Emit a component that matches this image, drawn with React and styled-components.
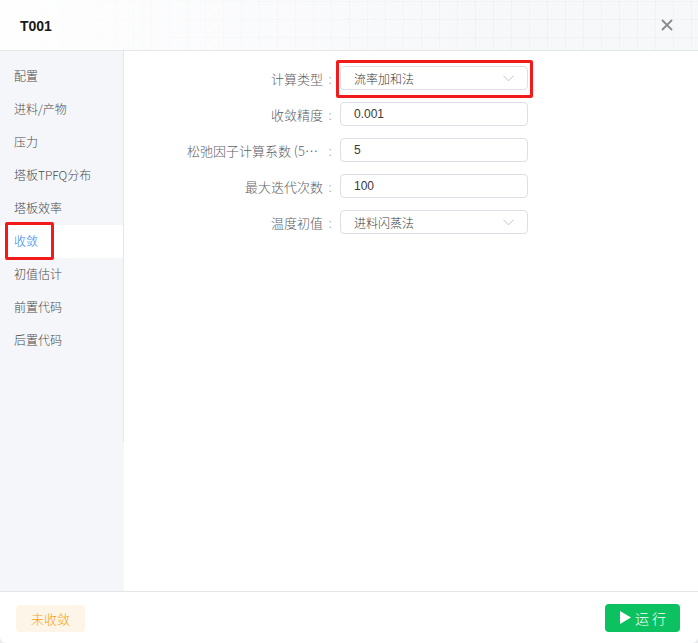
import React, { useState } from 'react'
import styled, { createGlobalStyle } from 'styled-components'

const GlobalStyle = createGlobalStyle`
  html, body {
    margin: 0;
    padding: 0;
    background: #e9eaee;
  }
  * { box-sizing: border-box; }
`

const menu = ['配置', '进料/产物', '压力', '塔板TPFQ分布', '塔板效率', '收敛', '初值估计', '前置代码', '后置代码']

const fields = [
  { label: '计算类型', value: '流率加和法', select: true, marked: true },
  { label: '收敛精度', value: '0.001' },
  { label: '松弛因子计算系数 (5~10)', value: '5' },
  { label: '最大迭代次数', value: '100' },
  { label: '温度初值', value: '进料闪蒸法', select: true },
]

const Dialog = styled.div`
  width: 698px;
  height: 643px;
  background: #fff;
  border-radius: 0 0 6px 6px;
  display: flex;
  flex-direction: column;
  overflow: hidden;
  font-family: "Noto Sans CJK SC", "Liberation Sans", sans-serif;
  font-weight: 300;
`

const Header = styled.div`
  height: 51px;
  flex: none;
  display: flex;
  align-items: center;
  justify-content: space-between;
  padding: 0 25px 0 20px;
  border-bottom: 1px solid #e6e7eb;
  background-color: #f7f8fa;
  background-image:
    linear-gradient(90deg, rgba(255,255,255,0.9), rgba(255,255,255,0) 70%),
    linear-gradient(rgba(0,0,0,0.025) 1px, transparent 1px),
    linear-gradient(90deg, rgba(0,0,0,0.025) 1px, transparent 1px);
  background-size: 100% 100%, 18px 18px, 18px 18px;
  background-position: 0 0, 0 1px, 7px 0;
`

const Title = styled.div`
  font-family: "Liberation Sans", Arial, sans-serif;
  font-weight: bold;
  font-size: 14px;
  color: #1a1a1a;
  margin-top: 1px;
`

const Close = styled.button`
  border: 0;
  background: none;
  padding: 0;
  width: 12px;
  height: 12px;
  cursor: pointer;
  display: flex;
  svg { display: block; }
`

const Body = styled.div`
  flex: 1;
  display: flex;
  min-height: 0;
`

const Sidebar = styled.div`
  width: 124px;
  flex: none;
  background: #f5f6fa;
`

const Menu = styled.ul`
  list-style: none;
  margin: 0;
  padding: 9px 0 0;
  height: 390px;
  border-right: 1px solid #e5e6ea;
`

const MenuItem = styled.li`
  height: 33px;
  line-height: 32px;
  padding-left: 14px;
  font-size: 12px;
  color: ${p => (p.$active ? '#2b7ef5' : '#4a4a4a')};
  background: ${p => (p.$active ? '#fff' : 'transparent')};
  position: relative;
  cursor: pointer;
`

const Mark = styled.span`
  position: absolute;
  border: 3px solid #f21b1b;
  border-radius: 2px;
  pointer-events: none;
  left: ${p => p.$l}px;
  top: ${p => p.$t}px;
  width: ${p => p.$w}px;
  height: ${p => p.$h}px;
`

const Main = styled.div`
  flex: 1;
  padding: 15px 0 0 63px;
  display: flex;
  flex-direction: column;
  gap: 12px;
`

const Row = styled.div`
  display: flex;
  align-items: center;
  height: 24px;
`

const Label = styled.div`
  width: 136px;
  font-size: 13px;
  color: #5e6066;
  text-align: right;
  white-space: nowrap;
  overflow: hidden;
  text-overflow: ellipsis;
`

const Colon = styled.span`
  width: 14px;
  font-size: 13px;
  color: #aaa;
  text-align: center;
  margin-right: 3px;
`

const Field = styled.div`
  position: relative;
  width: 188px;
  height: 24px;
  border: 1px solid #dcdfe6;
  border-radius: 4px;
  display: flex;
  align-items: center;
  justify-content: space-between;
  padding: 0 13px;
  font-size: 12px;
  color: #3a3a3a;
  font-family: ${p => (p.$select ? '"Noto Sans CJK SC", sans-serif' : '"Liberation Sans", Arial, sans-serif')};
  font-weight: ${p => (p.$select ? 300 : 400)};
`

const Footer = styled.div`
  height: 52px;
  flex: none;
  border-top: 1px solid #e4e5e9;
  display: flex;
  align-items: center;
  justify-content: space-between;
  padding: 0 18px 0 16px;
`

const Status = styled.div`
  height: 27px;
  width: 69px;
  border-radius: 4px;
  background: #fdf5e7;
  color: #f5a21b;
  font-size: 13px;
  display: flex;
  align-items: center;
  justify-content: center;
  margin-top: 1px;
`

const RunButton = styled.button`
  height: 28px;
  width: 75px;
  border: 0;
  border-radius: 4px;
  background: #0bc160;
  color: #fff;
  font-size: 14px;
  font-weight: 300;
  font-family: "Noto Sans CJK SC", sans-serif;
  display: flex;
  align-items: center;
  justify-content: center;
  gap: 4px;
  letter-spacing: 3px;
  padding: 0 0 0 4px;
  cursor: pointer;
`

const Chevron = () => (
  <svg width="11" height="7" viewBox="0 0 11 7" fill="none">
    <path d="M0.5 0.8 L5.5 5.8 L10.5 0.8" stroke="#bfc2c8" strokeWidth="1" />
  </svg>
)

export default function App() {
  const [active, setActive] = useState('收敛')
  return (
    <>
      <GlobalStyle />
      <Dialog>
        <Header>
          <Title>T001</Title>
          <Close>
            <svg width="12" height="12" viewBox="0 0 12 12">
              <path d="M1 1 L11 11 M11 1 L1 11" stroke="#8a8a8f" strokeWidth="1.8" />
            </svg>
          </Close>
        </Header>
        <Body>
          <Sidebar>
            <Menu>
              {menu.map(m => (
                <MenuItem key={m} $active={m === active} onClick={() => setActive(m)}>
                  {m}
                  {m === '收敛' && <Mark $l={5} $t={-3} $w={49} $h={38} />}
                </MenuItem>
              ))}
            </Menu>
          </Sidebar>
          <Main>
            {fields.map(f => (
              <Row key={f.label}>
                <Label>{f.label}</Label>
                <Colon>:</Colon>
                <Field $select={f.select}>
                  {f.value}
                  {f.select && <Chevron />}
                  {f.marked && <Mark $l={-5} $t={-7} $w={197} $h={38} />}
                </Field>
              </Row>
            ))}
          </Main>
        </Body>
        <Footer>
          <Status>未收敛</Status>
          <RunButton>
            <svg width="11" height="13" viewBox="0 0 11 13">
              <path d="M0 0 L11 6.5 L0 13 Z" fill="#fff" />
            </svg>
            运行
          </RunButton>
        </Footer>
      </Dialog>
    </>
  )
}
